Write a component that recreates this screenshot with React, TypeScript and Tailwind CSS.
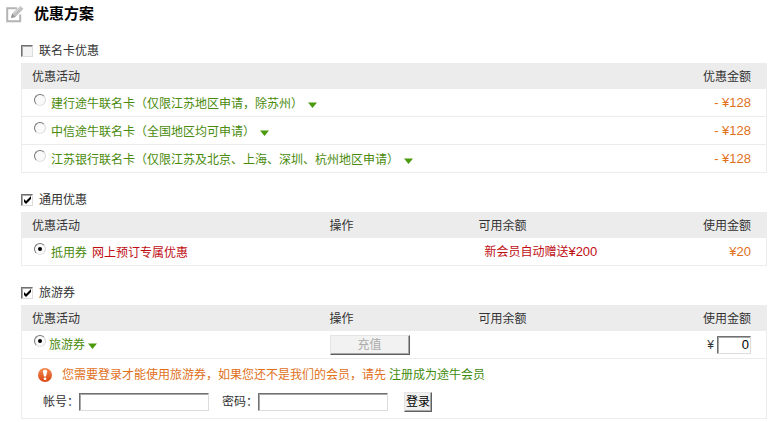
import { useState, type ReactNode } from "react";

const CARD_OFFERS = [
  { id: "ccb", name: "建行途牛联名卡（仅限江苏地区申请，除苏州）", amount: "- ¥128" },
  { id: "citic", name: "中信途牛联名卡（全国地区均可申请）", amount: "- ¥128" },
  { id: "jsb", name: "江苏银行联名卡（仅限江苏及北京、上海、深圳、杭州地区申请）", amount: "- ¥128" },
];

const inset =
  "border border-t-[#707070] border-l-[#707070] border-r-[#dcdcdc] border-b-[#dcdcdc] shadow-[inset_1px_1px_0_#a8a8a8]";
const outset =
  "border border-t-[#e4e4e4] border-l-[#e4e4e4] border-r-[#606060] border-b-[#606060] shadow-[inset_-1px_-1px_0_#a8a8a8]";

function NoteIcon() {
  return (
    <svg width="18" height="18" viewBox="0 0 18 18" fill="none" aria-hidden="true">
      <path d="M11 3.2H1.2v13h13V9.5" stroke="#b4b4b4" strokeWidth="2" />
      <path d="M5 13l1.2-4.4L14.4 1l3 2.8L9.4 12z" fill="#bdbdbd" />
      <path d="M5 13l1.2-4.4 3.2 3.4z" fill="#979797" />
      <path d="M7.2 9.2L15 2" stroke="#dedede" />
    </svg>
  );
}

function WarningIcon() {
  return (
    <svg width="14" height="14" viewBox="0 0 14 14" aria-hidden="true">
      <defs>
        <linearGradient id="warn" x1="0" y1="0" x2="0" y2="1">
          <stop offset="0" stopColor="#f48a4e" />
          <stop offset="1" stopColor="#d8430f" />
        </linearGradient>
      </defs>
      <circle cx="7" cy="7" r="7" fill="url(#warn)" />
      <path d="M4.8 3.4C4.8 1.2 9.2 1.2 9.2 3.4L8 8.4H6z" fill="#fff" />
      <circle cx="7" cy="10.8" r="1.4" fill="#fff" />
    </svg>
  );
}

function Arrow() {
  return (
    <svg width="9" height="6" viewBox="0 0 9 6" className="mt-0.5" aria-hidden="true">
      <path d="M0 0.5h9L4.5 6z" fill="#4a9a0c" />
    </svg>
  );
}

function Section({ label, on, children }: { label: string; on: boolean; children: ReactNode }) {
  const [checked, setChecked] = useState(on);
  return (
    <section>
      <label className="flex h-6 items-center gap-1.5">
        <span className="relative h-3 w-3">
          <input
            type="checkbox"
            checked={checked}
            onChange={(e) => setChecked(e.target.checked)}
            className={`peer block h-3 w-3 appearance-none bg-[#f4f4f4] checked:bg-white ${inset}`}
          />
          <svg
            viewBox="0 0 12 12"
            className="pointer-events-none absolute inset-0 hidden peer-checked:block"
            aria-hidden="true"
          >
            <path d="M3 5v3l2 2 5-5V2L5 7z" fill="#000" />
          </svg>
        </span>
        {label}
      </label>
      {children}
    </section>
  );
}

function Radio({ id, name, on = false }: { id: string; name: string; on?: boolean }) {
  return (
    <input
      type="radio"
      id={id}
      name={name}
      defaultChecked={on}
      className="mb-2 grid h-3 w-3 shrink-0 appearance-none place-items-center rounded-full border border-t-[#777] border-r-[#d8d8d8] border-b-[#e4e4e4] border-l-[#777] bg-[#fafafa] checked:before:h-1 checked:before:w-1 checked:before:rounded-full checked:before:bg-black"
    />
  );
}

const tableClass =
  "w-full table-fixed border-separate border-spacing-0 border-x border-[#ececec] text-left";
const thClass = "h-[26px] bg-[#ececec] px-[10px] pt-0.5 pb-0 font-normal";
const tdClass = "h-7 border-b border-[#ececec] pb-0";

function WideHead() {
  return (
    <thead>
      <tr>
        <th className={`w-2/5 ${thClass}`}>优惠活动</th>
        <th className={`w-1/5 ${thClass}`}>操作</th>
        <th className={`w-1/5 ${thClass}`}>可用余额</th>
        <th className={`w-1/5 text-right ${thClass} pr-[15px]`}>使用金额</th>
      </tr>
    </thead>
  );
}

export default function App() {
  return (
    <main className="bg-white pr-1 pl-[6px] font-['Liberation_Sans','Noto_Sans_CJK_SC',sans-serif] text-xs leading-4 text-[#333]">
      <header className="flex h-[39px] items-start gap-[10px] pt-[5px]">
        <NoteIcon />
        <h1 className="text-[15px] leading-[18px] font-bold text-black">优惠方案</h1>
      </header>

      <div className="flex flex-col gap-[15px] pl-[15px]">
        <Section label="联名卡优惠" on={false}>
          <table className={tableClass}>
            <thead>
              <tr>
                <th className={`w-4/5 ${thClass}`}>优惠活动</th>
                <th className={`w-1/5 text-right ${thClass} pr-[15px]`}>优惠金额</th>
              </tr>
            </thead>
            <tbody>
              {CARD_OFFERS.map((o) => (
                <tr key={o.id}>
                  <td className={`${tdClass} pt-0.5 pl-3`}>
                    <div className="flex items-center gap-[5px] text-[#4a8a0c]">
                      <Radio id={o.id} name="card" />
                      <label htmlFor={o.id}>{o.name}</label>
                      <Arrow />
                    </div>
                  </td>
                  <td className={`${tdClass} pr-[15px] text-right text-[13px] text-[#e0701a]`}>{o.amount}</td>
                </tr>
              ))}
            </tbody>
          </table>
        </Section>

        <Section label="通用优惠" on>
          <table className={tableClass}>
            <WideHead />
            <tbody>
              <tr>
                <td className={`${tdClass} pt-0.5 pl-3`}>
                  <div className="flex items-center gap-[5px] text-[#4a8a0c]">
                    <Radio id="voucher" name="common" on />
                    <label htmlFor="voucher">抵用券</label>
                    <span className="text-[#c00d12]">网上预订专属优惠</span>
                  </div>
                </td>
                <td className={tdClass} />
                <td className={`${tdClass} pl-4 whitespace-nowrap text-[#c00d12]`}>
                  新会员自动赠送<span className="text-[13px]">¥200</span>
                </td>
                <td className={`${tdClass} pr-[15px] text-right text-[13px] text-[#e0701a]`}>¥20</td>
              </tr>
            </tbody>
          </table>
        </Section>

        <Section label="旅游券" on>
          <table className={tableClass}>
            <WideHead />
            <tbody>
              <tr>
                <td className={`${tdClass} pl-3`}>
                  <div className="flex items-center gap-[3px] text-[#4a8a0c]">
                    <Radio id="travel" name="travel" on />
                    <label htmlFor="travel">旅游券</label>
                    <Arrow />
                  </div>
                </td>
                <td className={`${tdClass} pl-[10px]`}>
                  <button type="button" disabled className={`block h-5 w-20 bg-[#f2f2f2] text-[#aaa] ${outset}`}>
                    充值
                  </button>
                </td>
                <td className={tdClass} />
                <td className={`${tdClass} pr-[15px]`}>
                  <label className="flex items-center justify-end gap-[3px]">
                    ¥
                    <input
                      type="text"
                      defaultValue="0"
                      className={`h-[18px] w-[34px] px-px text-right text-[13px] text-black ${inset}`}
                    />
                  </label>
                </td>
              </tr>
              <tr>
                <td colSpan={4} className="border-b border-[#ececec] pt-2 pb-[6px] pl-4">
                  <p className="flex items-center text-[#e0701a]">
                    <WarningIcon />
                    <span className="ml-[10px]">您需要登录才能使用旅游券，如果您还不是我们的会员，请先</span>
                    <a href="#register" className="ml-[3px] text-[#3f8a0c]">
                      注册成为途牛会员
                    </a>
                  </p>
                  <form className="mt-[9px] ml-[5px] flex items-center" onSubmit={(e) => e.preventDefault()}>
                    <label htmlFor="account">帐号：</label>
                    <input id="account" type="text" className={`h-[18px] w-[130px] px-1 ${inset}`} />
                    <label htmlFor="password" className="ml-[13px]">
                      密码：
                    </label>
                    <input id="password" type="password" className={`h-[18px] w-[130px] px-1 ${inset}`} />
                    <button type="submit" className={`ml-4 h-5 bg-[#f0f0f0] px-px text-black ${outset}`}>
                      登录
                    </button>
                  </form>
                </td>
              </tr>
            </tbody>
          </table>
        </Section>
      </div>
    </main>
  );
}
